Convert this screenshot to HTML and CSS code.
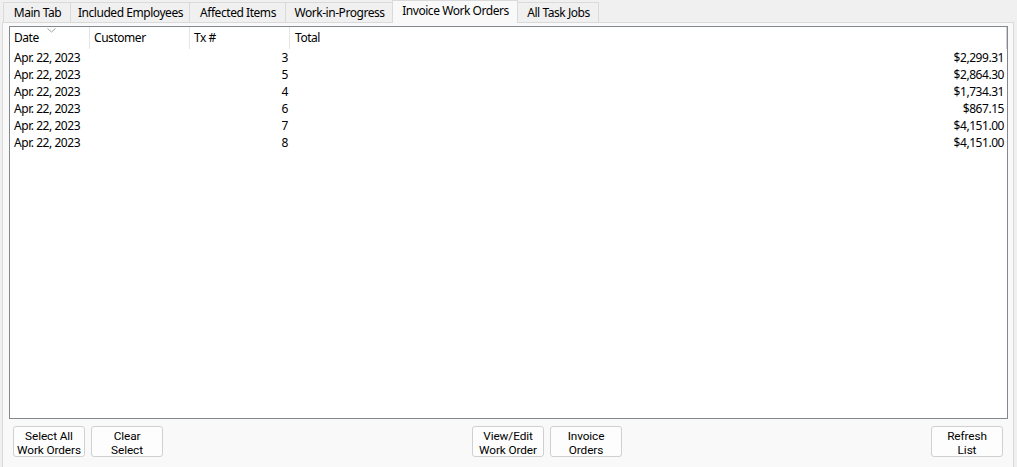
FILE: index.html
```html
<!DOCTYPE html>
<html lang="en">
<head>
  <meta charset="UTF-8">
  <title>Invoice Work Orders</title>
  <link rel="stylesheet" href="styles.css">
</head>
<body>
  <div class="tabs">
    <div class="tab t-main">Main Tab</div>
    <div class="tab t-emp">Included Employees</div>
    <div class="tab t-items">Affected Items</div>
    <div class="tab t-wip">Work-in-Progress</div>
    <div class="tab t-inv active">Invoice Work Orders</div>
    <div class="tab t-jobs">All Task Jobs</div>
  </div>

  <div class="pane">
    <div class="list">
      <div class="row head">
        <div class="col c-date">Date<span class="sort"><svg width="9" height="5" viewBox="0 0 9 5"><path d="M0.5 0.5 L4.5 4 L8.5 0.5" fill="none" stroke="#a0a0a0" stroke-width="1"/></svg></span></div>
        <div class="col c-cust">Customer</div>
        <div class="col c-tx">Tx #</div>
        <div class="col c-total">Total</div>
      </div>
      <div class="row"><div class="col c-date">Apr. 22, 2023</div><div class="col c-cust"></div><div class="col c-tx num">3</div><div class="col c-total num">$2,299.31</div></div>
      <div class="row"><div class="col c-date">Apr. 22, 2023</div><div class="col c-cust"></div><div class="col c-tx num">5</div><div class="col c-total num">$2,864.30</div></div>
      <div class="row"><div class="col c-date">Apr. 22, 2023</div><div class="col c-cust"></div><div class="col c-tx num">4</div><div class="col c-total num">$1,734.31</div></div>
      <div class="row"><div class="col c-date">Apr. 22, 2023</div><div class="col c-cust"></div><div class="col c-tx num">6</div><div class="col c-total num">$867.15</div></div>
      <div class="row"><div class="col c-date">Apr. 22, 2023</div><div class="col c-cust"></div><div class="col c-tx num">7</div><div class="col c-total num">$4,151.00</div></div>
      <div class="row"><div class="col c-date">Apr. 22, 2023</div><div class="col c-cust"></div><div class="col c-tx num">8</div><div class="col c-total num">$4,151.00</div></div>
    </div>

    <div class="buttons">
      <div class="group">
        <button>Select All<br>Work Orders</button>
        <button>Clear<br>Select</button>
      </div>
      <div class="group">
        <button>View/Edit<br>Work Order</button>
        <button>Invoice<br>Orders</button>
      </div>
      <div class="group">
        <button>Refresh<br>List</button>
      </div>
    </div>
  </div>
</body>
</html>
```

FILE: styles.css
```css
body {
    margin: 0;
    background-color: #f0f0f0;
    font-family: "Noto Sans", "Open Sans", sans-serif;
    font-size: 12px;
    letter-spacing: -0.45px;
    color: #000;
    height: 467px;
    overflow: hidden;
}

.tabs {
    display: flex;
    align-items: flex-end;
    height: 22px;
    padding-left: 3px;
}

.tab {
    box-sizing: border-box;
    height: 20px;
    line-height: 19px;
    padding-left: 1px;
    text-align: center;
    border: 1px solid #dadada;
    border-bottom: none;
    margin-right: -1px;
    background-color: #f0f0f0;
    white-space: nowrap;
}

.tab.active {
    height: 23px;
    line-height: 19px;
    background-color: #f9f9f9;
    position: relative;
    z-index: 1;
    margin-bottom: -1px;
}

.t-main { width: 68px; }
.t-emp { width: 120px; }
.t-items { width: 97px; }
.t-wip { width: 108px; }
.t-inv { width: 126px; }
.t-jobs { width: 82px; }

.pane {
    margin: 0 3px 0 2px;
    height: 445px;
    border: 1px solid #dadada;
    border-bottom: none;
    background-color: #f9f9f9;
    padding: 3px 5px 0 6px;
}

.list {
    height: 391px;
    border: 1px solid #828790;
    background-color: #fff;
}

.row {
    display: flex;
    height: 17px;
    line-height: 17px;
}

.row.head {
    height: 22px;
    line-height: 22px;
}

.col {
    box-sizing: border-box;
    padding: 0 2px 0 4px;
    white-space: nowrap;
}

.head .col {
    border-right: 1px solid #e5e5e5;
    position: relative;
}

.head .c-total {
    border-right-color: #d2d2d2;
    padding-left: 5px;
}

.c-date { width: 80px; }
.c-cust { width: 100px; }
.c-tx { width: 100px; }
.c-total { flex: 1; }

.num {
    text-align: right;
}

.c-total.num {
    padding-right: 3px;
}

.sort {
    position: absolute;
    left: 37px;
    top: 1px;
    line-height: 0;
}

.buttons {
    display: flex;
    justify-content: space-between;
    padding: 7px 5px 0 4px;
}

.group {
    display: flex;
    gap: 6px;
}

button {
    width: 72px;
    height: 31px;
    padding: 2px 0 0 0;
    border: 1px solid #d0d0d0;
    border-radius: 3px;
    background-color: #fdfdfd;
    font-family: Roboto, "Noto Sans", sans-serif;
    font-size: 11.8px;
    letter-spacing: -0.1px;
    line-height: 14px;
    white-space: nowrap;
    color: #000;
}
```
